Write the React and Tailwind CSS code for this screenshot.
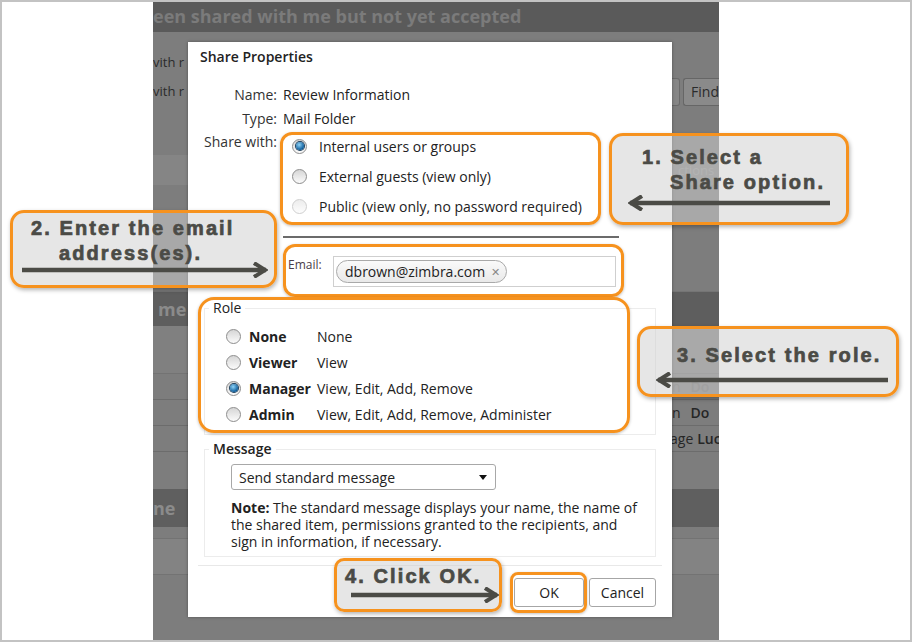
import React from 'react';

// arrow used inside the grey annotation callouts
function Arrow({ width, dir = 'left', className = '' }) {
  const h = 16;
  const y = 8;
  const x1 = 2;
  const x2 = width - 2;
  return (
    <svg width={width} height={h} className={className}>
      <line x1={x1} y1={y} x2={x2} y2={y} stroke="#4b4b46" strokeWidth="4.5" />
      {dir === 'left' ? (
        <polyline points={`${x1 + 12},${y - 7} ${x1 + 1},${y} ${x1 + 12},${y + 7}`} fill="none" stroke="#4b4b46" strokeWidth="4" />
      ) : (
        <polyline points={`${x2 - 12},${y - 7} ${x2 - 1},${y} ${x2 - 12},${y + 7}`} fill="none" stroke="#4b4b46" strokeWidth="4" />
      )}
    </svg>
  );
}

function Radio({ checked = false, disabled = false }) {
  return (
    <span
      className={`flex h-[15px] w-[15px] shrink-0 items-center justify-center rounded-full border ${
        disabled
          ? 'border-[#cfcfcf] bg-[linear-gradient(180deg,#ececec,#fdfdfd)]'
          : 'border-[#8d8d8d] bg-[linear-gradient(180deg,#d6d6d6,#fbfbfb)]'
      }`}
    >
      {checked && (
        <span className="h-[8px] w-[8px] rounded-full bg-[radial-gradient(circle_at_40%_35%,#8fd3f7,#0e5e9c_70%)] shadow-[0_0_0_1px_#1d3f5c]" />
      )}
    </span>
  );
}

const calloutText = "font-['Liberation_Sans',Arial,sans-serif] text-[20px] font-bold tracking-[2.1px] text-[#4b4b46] leading-[25px] whitespace-nowrap [-webkit-text-stroke:0.7px_#4b4b46]";

export default function App() {
  const shareOptions = [
    { label: 'Internal users or groups', checked: true },
    { label: 'External guests (view only)' },
    { label: 'Public (view only, no password required)', disabled: true },
  ];

  const roles = [
    { name: 'None', desc: 'None' },
    { name: 'Viewer', desc: 'View' },
    { name: 'Manager', desc: 'View, Edit, Add, Remove', checked: true },
    { name: 'Admin', desc: 'View, Edit, Add, Remove, Administer' },
  ];

  // rows of the dimmed list peeking out on the right of the dialog
  const listRows = [
    { a: 'n', b: 'Do', spacer: 'w-[519px]', gap: 'gap-[10px]', tone: 'text-[#6f6f6f]' },
    { a: 'n', b: 'Do', spacer: 'w-[519px]', gap: 'gap-[10px]', tone: 'text-[#262626]' },
    { a: 'age', b: 'Luc', spacer: 'w-[517px]', gap: 'gap-[4px]', tone: 'text-[#262626]' },
  ];

  return (
    <div className="relative flex h-[642px] w-[912px] overflow-hidden bg-white">
      <div className="w-[153px] shrink-0" />

      {/* BACKGROUND APP (dimmed) */}
      <div className="flex w-[566px] shrink-0 flex-col overflow-hidden bg-[#7d7d7d] font-['Open_Sans',sans-serif] text-[13px] text-[#2b2b2b]">
        <div className="h-[32px] shrink-0 whitespace-nowrap bg-[#5a5a5a] text-[18px] font-bold leading-[32px] text-[#7b7b7b]">
          een shared with me but not yet accepted
        </div>
        <div className="flex h-[123px] shrink-0">
          <div className="w-[519px] pt-[20px]">
            <div className="h-[29px] leading-[20px] whitespace-nowrap">vith r</div>
            <div className="leading-[20px] whitespace-nowrap">vith r</div>
          </div>
          <div className="flex flex-1 items-start gap-[3px] pt-[46px]">
            <div className="h-[28px] w-[13px] shrink-0 rounded-r-[3px] border border-l-0 border-[#6a6a6a] bg-[#868686]" />
            <div className="h-[28px] flex-1 rounded-l-[3px] border border-r-0 border-[#666] bg-[#8a8a8a] pl-[7px] text-[14px] leading-[26px] whitespace-nowrap">Find</div>
          </div>
        </div>
        <div className="flex h-[30px] shrink-0 bg-[#858585]">
          <div className="w-[525px]" />
          <div className="whitespace-nowrap leading-[30px] text-[#959595]">ctions</div>
        </div>
        <div className="h-[107px] shrink-0 border-b border-[#757575]" />
        <div className="h-[34px] shrink-0 whitespace-nowrap bg-[#5e5e5e] pl-[5px] text-[18px] font-bold leading-[34px] text-[#8b8b8b]">me</div>
        <div className="h-[48px] shrink-0 border-b border-[#737373] bg-[#808080]" />
        {listRows.map((r, i) => (
          <div key={i} className={`flex h-[26px] shrink-0 border-b border-[#6c6c6c] leading-[26px] ${r.tone}`}>
            <div className={`shrink-0 ${r.spacer}`} />
            <div className={`flex whitespace-nowrap text-[14px] ${r.gap}`}>
              <span>{r.a}</span>
              <span className="font-semibold">{r.b}</span>
            </div>
          </div>
        ))}
        <div className="h-[37px] shrink-0" />
        <div className="h-[38px] shrink-0 whitespace-nowrap bg-[#5f5f5f] text-[18px] font-bold leading-[38px] text-[#8b8b8b]">ne</div>
        <div className="h-[12px] shrink-0 border-b border-[#737373]" />
        <div className="h-[36px] shrink-0 border-b border-[#737373] bg-[#838383]" />
        <div className="flex-1" />
      </div>
      <div className="flex-1" />

      {/* SHARE PROPERTIES DIALOG */}
      <div className="absolute left-[188px] top-[42px] w-[484px] bg-white pb-[10px] font-['Open_Sans',sans-serif] text-[14px] text-[#222] shadow-[0_0_3px_rgba(0,0,0,0.35)]">
        <div className="mt-[5px] pl-[12px] text-[14px] font-semibold leading-[20px] text-[#222]">Share Properties</div>

        <div className="mt-[15px] flex flex-col">
          <div className="flex h-[24px] items-center">
            <div className="w-[95px] pr-[6px] text-right text-[#333]">Name:</div>
            <div>Review Information</div>
          </div>
          <div className="flex h-[24px] items-center">
            <div className="w-[95px] pr-[6px] text-right text-[#333]">Type:</div>
            <div>Mail Folder</div>
          </div>
          <div className="flex">
            <div className="h-[24px] w-[95px] pr-[6px] text-right leading-[24px] text-[#333]">Share with:</div>
            <div className="flex flex-col pt-[1px]">
              {shareOptions.map((o) => (
                <div key={o.label} className="flex h-[30px] items-center gap-[12px] pl-[9px]">
                  <Radio checked={o.checked} disabled={o.disabled} />
                  <span>{o.label}</span>
                </div>
              ))}
            </div>
          </div>
        </div>

        <div className="ml-[95px] mt-[15px] h-[2px] w-[336px] bg-[#6b6b6b]" />

        <div className="ml-[100px] mt-[18px] flex items-start">
          <div className="w-[45px] pt-[1px] text-[12px] leading-[16px] text-[#4a3b48]">Email:</div>
          <div className="flex h-[31px] w-[283px] items-center border border-[#cfcfcf] pl-[2px]">
            <div className="flex h-[23px] items-center gap-[6px] rounded-full border border-[#a9a9a9] bg-[linear-gradient(180deg,#fafafa,#e9e9e9)] pl-[8px] pr-[6px] text-[14px] leading-none text-[#222]">
              dbrown@zimbra.com
              <span className="text-[11px] leading-none text-[#888]">✕</span>
            </div>
          </div>
        </div>

        <fieldset className="mx-[16px] mt-[12px] border border-[#ececec] pb-[7px] pl-[4px]">
          <legend className="px-[4px] leading-[18px] text-[#222]">Role</legend>
          <div className="mt-[6px] flex flex-col pl-[17px]">
            {roles.map((r) => (
              <div key={r.name} className="flex h-[26px] items-center">
                <Radio checked={r.checked} />
                <span className="ml-[8px] w-[68px] font-bold">{r.name}</span>
                <span>{r.desc}</span>
              </div>
            ))}
          </div>
        </fieldset>

        <fieldset className="mx-[16px] mt-[5px] border border-[#ececec] pb-[6px] pl-[4px]">
          <legend className="px-[4px] font-semibold leading-[18px] text-[#222]">Message</legend>
          <div className="ml-[22px] mt-[6px] flex h-[26px] w-[265px] items-center justify-between rounded-[3px] border border-[#a8a8a8] pl-[7px] pr-[8px] text-[14px]">
            <span>Send standard message</span>
            <span className="h-0 w-0 border-x-[4px] border-t-[5px] border-x-transparent border-t-[#111]" />
          </div>
          <p className="ml-[22px] mt-[9px] whitespace-nowrap leading-[17px]">
            <b>Note:</b> The standard message displays your name, the name of
            <br />
            the shared item, permissions granted to the recipients, and
            <br />
            sign in information, if necessary.
          </p>
        </fieldset>

        <div className="mx-[10px] mt-[8px] h-px bg-[#e8e8e8]" />

        <div className="mt-[12px] flex justify-end gap-[5px] pr-[16px]">
          <button className="h-[29px] w-[70px] rounded-[3px] border border-[#a6a6a6] bg-white text-[14px] text-[#222]">OK</button>
          <button className="h-[29px] w-[67px] rounded-[3px] border border-[#a6a6a6] bg-white text-[14px] text-[#222]">Cancel</button>
        </div>
      </div>

      {/* ORANGE HIGHLIGHT BOXES */}
      <div className="absolute left-[280px] top-[132px] h-[93px] w-[321px] rounded-[12px] border-[3px] border-[#f6921e] shadow-[0_1px_3px_rgba(0,0,0,0.25)]" />
      <div className="absolute left-[283px] top-[244px] h-[53px] w-[341px] rounded-[12px] border-[3px] border-[#f6921e] shadow-[0_1px_3px_rgba(0,0,0,0.25)]" />
      <div className="absolute left-[198px] top-[297px] h-[136px] w-[432px] rounded-[16px] border-[3px] border-[#f6921e] shadow-[0_1px_3px_rgba(0,0,0,0.25)]" />
      <div className="absolute left-[510px] top-[572px] h-[41px] w-[77px] rounded-[8px] border-[3px] border-[#f6921e] shadow-[0_1px_3px_rgba(0,0,0,0.25)]" />

      {/* ANNOTATION CALLOUTS */}
      <div className="absolute left-[609px] top-[133px] h-[92px] w-[240px] rounded-[14px] border-[3px] border-[#f6921e] bg-[rgba(207,207,207,0.52)] pt-[9px] shadow-[1px_2px_4px_rgba(0,0,0,0.3)]">
        <div className={`pl-[30px] ${calloutText}`}>1. Select a</div>
        <div className={`pl-[58px] ${calloutText}`}>Share option.</div>
        <Arrow width={204} dir="left" className="ml-[16px]" />
      </div>

      <div className="absolute left-[10px] top-[210px] h-[78px] w-[267px] rounded-[14px] border-[3px] border-[#f6921e] bg-[rgba(207,207,207,0.52)] pt-[3px] shadow-[1px_2px_4px_rgba(0,0,0,0.3)]">
        <div className={`pl-[18px] ${calloutText}`}>2. Enter the email</div>
        <div className={`pl-[46px] ${calloutText}`}>address(es).</div>
        <Arrow width={248} dir="right" className="-mt-[4px] ml-[7px]" />
      </div>

      <div className="absolute left-[637px] top-[326px] h-[71px] w-[262px] rounded-[14px] border-[3px] border-[#f6921e] bg-[rgba(207,207,207,0.52)] pt-[14px] shadow-[1px_2px_4px_rgba(0,0,0,0.3)]">
        <div className={`pl-[37px] ${calloutText}`}>3. Select the role.</div>
        <Arrow width={234} dir="left" className="mt-[4px] ml-[16px]" />
      </div>

      <div className="absolute left-[334px] top-[558px] h-[54px] w-[168px] rounded-[10px] border-[3px] border-[#f6921e] bg-[rgba(207,207,207,0.52)] pt-[3px] shadow-[1px_2px_4px_rgba(0,0,0,0.3)]">
        <div className={`pl-[8px] ${calloutText}`}>4. Click OK.</div>
        <Arrow width={150} dir="right" className="-mt-[2px] ml-[12px]" />
      </div>

      {/* outer frame of the screenshot */}
      <div className="pointer-events-none absolute inset-0 border-2 border-[#c3c3c3]" />
    </div>
  );
}
